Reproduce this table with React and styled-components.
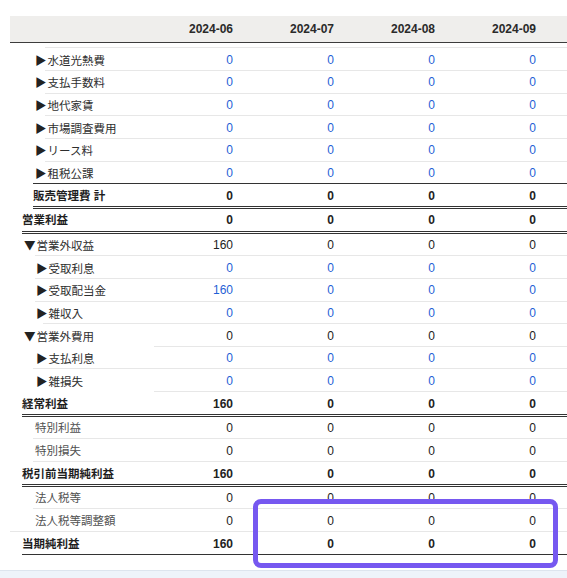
import React from 'react';
import styled, { createGlobalStyle } from 'styled-components';

const Global = createGlobalStyle`
  html, body { margin: 0; padding: 0; background: #fff; }
  body { font-family: "Liberation Sans", "Noto Sans CJK JP", sans-serif; color: #333; }
`;

const Page = styled.div`
  position: relative;
  width: 567px;
  height: 578px;
  overflow: hidden;
  padding-top: 16px;
  box-sizing: border-box;
  display: flex;
  flex-direction: column;
`;

const Table = styled.div`
  margin-left: 10px;
  display: flex;
  flex-direction: column;
`;

const cols = '144px repeat(4, 101px) 1fr';

const HeaderRow = styled.div`
  display: grid;
  grid-template-columns: ${cols};
  height: 26px;
  background: #efeeec;
  border-bottom: 1px solid #3c3c3c;
`;

const HeaderCell = styled.div`
  font-size: 12px;
  font-weight: bold;
  color: #2a2a2a;
  text-align: right;
  padding-right: 22px;
  padding-top: 1px;
  line-height: 25px;
`;

const Row = styled.div`
  display: grid;
  grid-template-columns: ${cols};
`;

const ruleStyle = {
  light: '1px solid #e7e7e7',
  dark: '1px solid #333',
  double: '3px double #333',
};
const ruleNone = {
  light: '1px solid transparent',
  dark: '1px solid transparent',
  double: '3px solid transparent',
};

const LabelCell = styled.div`
  margin-left: ${(p) => (p.$line == null ? 0 : p.$line)}px;
  text-indent: ${(p) => p.$text - (p.$line == null ? 0 : p.$line)}px;
  padding-top: ${(p) => p.$pad}px;
  height: ${(p) => p.$h - p.$pad}px;
  line-height: ${(p) => p.$h - p.$pad}px;
  white-space: nowrap;
  font-size: 11.5px;
  font-weight: ${(p) => (p.$bold ? 'bold' : 'normal')};
  color: ${(p) => p.$color};
  border-bottom: ${(p) => (p.$line == null ? ruleNone[p.$rule] : ruleStyle[p.$rule])};
`;

const Marker = styled.span`
  font-family: "Noto Sans CJK JP", sans-serif;
  font-size: 11.5px;
  color: #222;
  margin-right: 1px;
`;

const NumCell = styled.div`
  padding-top: ${(p) => p.$pad}px;
  height: ${(p) => p.$h - p.$pad}px;
  line-height: ${(p) => p.$h - p.$pad}px;
  text-align: right;
  padding-right: 22px;
  font-size: 12px;
  font-weight: ${(p) => (p.$bold ? 'bold' : 'normal')};
  color: ${(p) => (p.$link ? '#1f5fd6' : '#222')};
  border-bottom: ${(p) => ruleStyle[p.$rule]};
`;

const Filler = styled.div`
  height: ${(p) => p.$h}px;
  border-bottom: ${(p) => ruleStyle[p.$rule]};
`;

const Footer = styled.div`
  margin-top: auto;
  height: 7px;
  background: #eef3fa;
  border-top: 1px solid #dde4ee;
`;

const Highlight = styled.div`
  position: absolute;
  left: 253px;
  top: 499px;
  width: 305px;
  height: 69px;
  box-sizing: border-box;
  border: 5px solid #7658f0;
  border-radius: 8px;
  pointer-events: none;
`;

const months = ['2024-06', '2024-07', '2024-08', '2024-09'];

const rows = [
  { label: '水道光熱費', mark: '▶', kind: 'child', text: 25, line: 35, rule: 'light', v: [0, 0, 0, 0] },
  { label: '支払手数料', mark: '▶', kind: 'child', text: 25, line: 35, rule: 'light', v: [0, 0, 0, 0] },
  { label: '地代家賃', mark: '▶', kind: 'child', text: 25, line: 35, rule: 'light', v: [0, 0, 0, 0] },
  { label: '市場調査費用', mark: '▶', kind: 'child', text: 25, line: 35, rule: 'light', v: [0, 0, 0, 0] },
  { label: 'リース料', mark: '▶', kind: 'child', text: 25, line: 35, rule: 'light', v: [0, 0, 0, 0] },
  { label: '租税公課', mark: '▶', kind: 'child', text: 25, line: 23, rule: 'dark', v: [0, 0, 0, 0] },
  { label: '販売管理費 計', kind: 'total', text: 23, line: 23, rule: 'double', v: [0, 0, 0, 0] },
  { label: '営業利益', kind: 'total', text: 12, line: 12, rule: 'double', v: [0, 0, 0, 0] },
  { label: '営業外収益', mark: '▼', kind: 'group', text: 14, line: 25, rule: 'light', v: [160, 0, 0, 0] },
  { label: '受取利息', mark: '▶', kind: 'child', text: 26, line: 25, rule: 'light', v: [0, 0, 0, 0] },
  { label: '受取配当金', mark: '▶', kind: 'child', text: 26, line: 25, rule: 'light', v: [160, 0, 0, 0] },
  { label: '雑収入', mark: '▶', kind: 'child', text: 26, line: 33, rule: 'light', v: [0, 0, 0, 0] },
  { label: '営業外費用', mark: '▼', kind: 'group', text: 14, line: null, rule: 'light', v: [0, 0, 0, 0] },
  { label: '支払利息', mark: '▶', kind: 'child', text: 26, line: 23, rule: 'light', v: [0, 0, 0, 0] },
  { label: '雑損失', mark: '▶', kind: 'child', text: 26, line: null, rule: 'light', v: [0, 0, 0, 0] },
  { label: '経常利益', kind: 'total', text: 12, line: 12, rule: 'double', v: [160, 0, 0, 0] },
  { label: '特別利益', kind: 'plain', text: 25, line: 23, rule: 'light', v: [0, 0, 0, 0] },
  { label: '特別損失', kind: 'plain', text: 25, line: 23, rule: 'light', v: [0, 0, 0, 0] },
  { label: '税引前当期純利益', kind: 'total', text: 12, line: 12, rule: 'double', v: [160, 0, 0, 0] },
  { label: '法人税等', kind: 'plain', text: 25, line: 23, rule: 'light', v: [0, 0, 0, 0] },
  { label: '法人税等調整額', kind: 'plain', text: 25, line: 0, rule: 'light', v: [0, 0, 0, 0] },
  { label: '当期純利益', kind: 'total', text: 12, line: 12, rule: 'dark', v: [160, 0, 0, 0] },
];

const labelColor = { child: '#2e2e2e', total: '#1e1e1e', group: '#2e2e2e', plain: '#505050' };

function TableRow({ r, h = 21.67, pad = 1.5 }) {
  const bold = r.kind === 'total';
  const link = r.kind === 'child';
  return (
    <Row>
      <LabelCell $line={r.line} $text={r.text} $rule={r.rule} $h={h} $pad={pad} $bold={bold} $color={labelColor[r.kind]}>
        {r.mark && <Marker>{r.mark}</Marker>}
        {r.label}
      </LabelCell>
      {r.v.map((n, i) => (
        <NumCell key={i} $h={h} $pad={pad} $rule={r.rule} $bold={bold} $link={link}>
          {n}
        </NumCell>
      ))}
      <Filler $h={h} $rule={r.rule} />
    </Row>
  );
}

export default function App() {
  return (
    <>
      <Global />
      <Page>
        <Table>
          <HeaderRow>
            <HeaderCell />
            {months.map((m) => (
              <HeaderCell key={m}>{m}</HeaderCell>
            ))}
            <HeaderCell />
          </HeaderRow>
          <TableRow r={{ label: '', kind: 'plain', text: 0, line: 35, rule: 'light', v: ['', '', '', ''] }} h={4.3} pad={0} />
          {rows.map((r) => (
            <TableRow key={r.label} r={r} />
          ))}
        </Table>
        <Footer />
        <Highlight />
      </Page>
    </>
  );
}
